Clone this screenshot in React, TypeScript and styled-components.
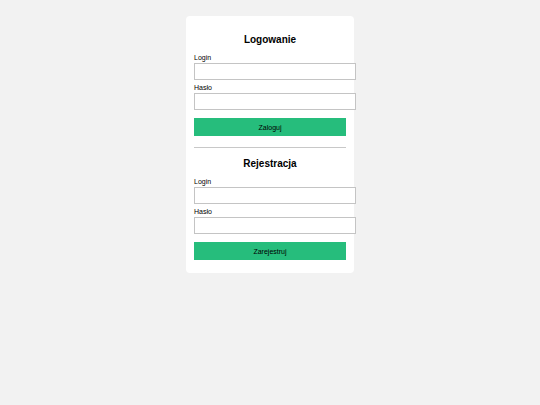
import styled, { createGlobalStyle } from "styled-components";

const GlobalStyle = createGlobalStyle`
	body {
		margin: 0;
		background: #f2f2f2;
		font-family: "Liberation Sans", Arial, sans-serif;
	}
`;

const Page = styled.div`
	display: flex;
	justify-content: center;
	padding-top: 16px;
`;

const Card = styled.div`
	width: 152px;
	padding: 8px 8px 13px;
	background: #ffffff;
	border-radius: 4px;
`;

const Heading = styled.h2`
	margin: 10px 0 8px;
	font-size: 10px;
	line-height: 12px;
	font-weight: bold;
	text-align: center;
	color: #000;
`;

const Label = styled.label`
	display: block;
	margin: 0 0 1px;
	font-size: 7px;
	line-height: 8px;
	color: #000;
`;

const Input = styled.input`
	display: block;
	width: 100%;
	height: 7px;
	padding: 4px;
	margin: 0 0 4px;
	border: 1px solid #c4c4c4;
	font-size: 7px;
	font-family: inherit;
	outline: none;
`;

const Button = styled.button`
	display: block;
	width: 100%;
	height: 18px;
	margin-top: 8px;
	border: none;
	padding: 0;
	background: #26bd7c;
	color: #000;
	font-size: 7px;
	font-family: inherit;
	cursor: pointer;
`;

const Divider = styled.hr`
	margin: 11px 0 2px;
	border: none;
	border-top: 1px solid #c8c8c8;
`;

const Form = ({ title, action }: { title: string; action: string }) => (
	<form onSubmit={(e) => e.preventDefault()}>
		<Heading>{title}</Heading>
		<Label>Login</Label>
		<Input type="text" />
		<Label>Hasło</Label>
		<Input type="password" />
		<Button type="submit">{action}</Button>
	</form>
);

const App = () => (
	<>
		<GlobalStyle />
		<Page>
			<Card>
				<Form title="Logowanie" action="Zaloguj" />
				<Divider />
				<Form title="Rejestracja" action="Zarejestruj" />
			</Card>
		</Page>
	</>
);

export default App;
